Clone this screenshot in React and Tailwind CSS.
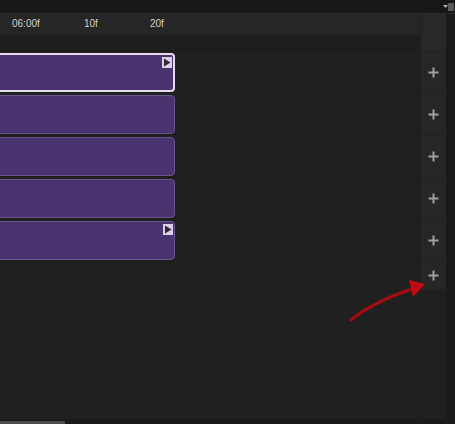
import React from "react";

const font = { fontFamily: '"Liberation Sans", Arial, sans-serif' };

function Flag() {
  return (
    <div className="absolute right-[1px] top-[2px] w-[10px] h-[11px] bg-[#d9cfe6] flex items-center justify-center">
      <svg width="8" height="9" viewBox="0 0 8 9"><path d="M1 0.5 L7.5 4.5 L1 8.5 Z" fill="#2e2838" /></svg>
    </div>
  );
}

function Clip({ selected, flag }) {
  return (
    <div className="h-[42px] pt-[2px] border-b border-[#1d1d1d] w-full">
      <div
        className={
          "relative w-[180px] -ml-[5px] h-[39px] rounded-[4px] bg-[#4a3470] " +
          (selected ? "border-2 border-[#e4dcec]" : "border border-[#6a5490]")
        }
      >
        {flag && <Flag />}
      </div>
    </div>
  );
}

function Plus({ h = "h-[42px]" }) {
  return (
    <div className={h + " flex items-center justify-center border-b border-[#212121] bg-[#262626]"}>
      <svg width="11" height="11" viewBox="0 0 11 11">
        <path d="M5.5 0.5 V10.5 M0.5 5.5 H10.5" stroke="#a0a0a0" strokeWidth="2" />
      </svg>
    </div>
  );
}

export default function App() {
  return (
    <div className="relative w-[455px] h-[424px] overflow-hidden bg-[#202020] flex flex-col" style={font}>
      <div className="h-[14px] bg-[#171717] border-b border-[#2c2c2c] flex justify-end items-center pr-[1px]">
        <svg width="11" height="8" viewBox="0 0 11 8">
          <path d="M0 2 H5 L2.5 5 Z" fill="#b0b0b0" />
          <path d="M5 1 H11 M5 3 H11 M5 5 H11 M5 7 H11" stroke="#9a9a9a" strokeWidth="1" />
        </svg>
      </div>
      <div className="flex-1 flex min-h-0">
        <div className="flex-1 flex flex-col min-w-0">
          <div className="h-[20px] bg-[#262626] flex items-center text-[10px] text-[#d0d0d0] leading-none">
            <span className="ml-[12px] w-[72px]">06:00f</span>
            <span className="w-[66px]">10f</span>
            <span>20f</span>
          </div>
          <div className="h-[17px] bg-[#1e1e1e]" />
          <div className="flex-1 flex flex-col">
            <Clip selected flag />
            <Clip />
            <Clip />
            <Clip />
            <Clip flag />
            <div className="h-[30px] border-b border-[#1d1d1d]" />
            <div className="flex-1" />
          </div>
        </div>
        <div className="w-[26px] flex flex-col border-l border-[#1d1d1d]">
          <div className="h-[38px] bg-[#282828] border-b border-[#212121]" />
          <Plus />
          <Plus />
          <Plus />
          <Plus />
          <Plus />
          <Plus h="h-[28px]" />
          <div className="flex-1" />
        </div>
        <div className="w-[9px] bg-[#1a1a1a]" />
      </div>
      <div className="h-[5px] bg-[#1a1a1a] flex">
        <div className="w-[65px] h-[3px] mt-[2px] bg-[#4a4a4a]" />
      </div>
      <svg className="absolute left-[345px] top-[275px]" width="85" height="50" viewBox="345 275 85 50">
        <path d="M351 320 C368 306 388 297 412 289" stroke="#a80a12" strokeWidth="3" fill="none" strokeLinecap="round" />
        <path d="M425 284 L409 280 L413 297 Z" fill="#c00a14" />
      </svg>
    </div>
  );
}
